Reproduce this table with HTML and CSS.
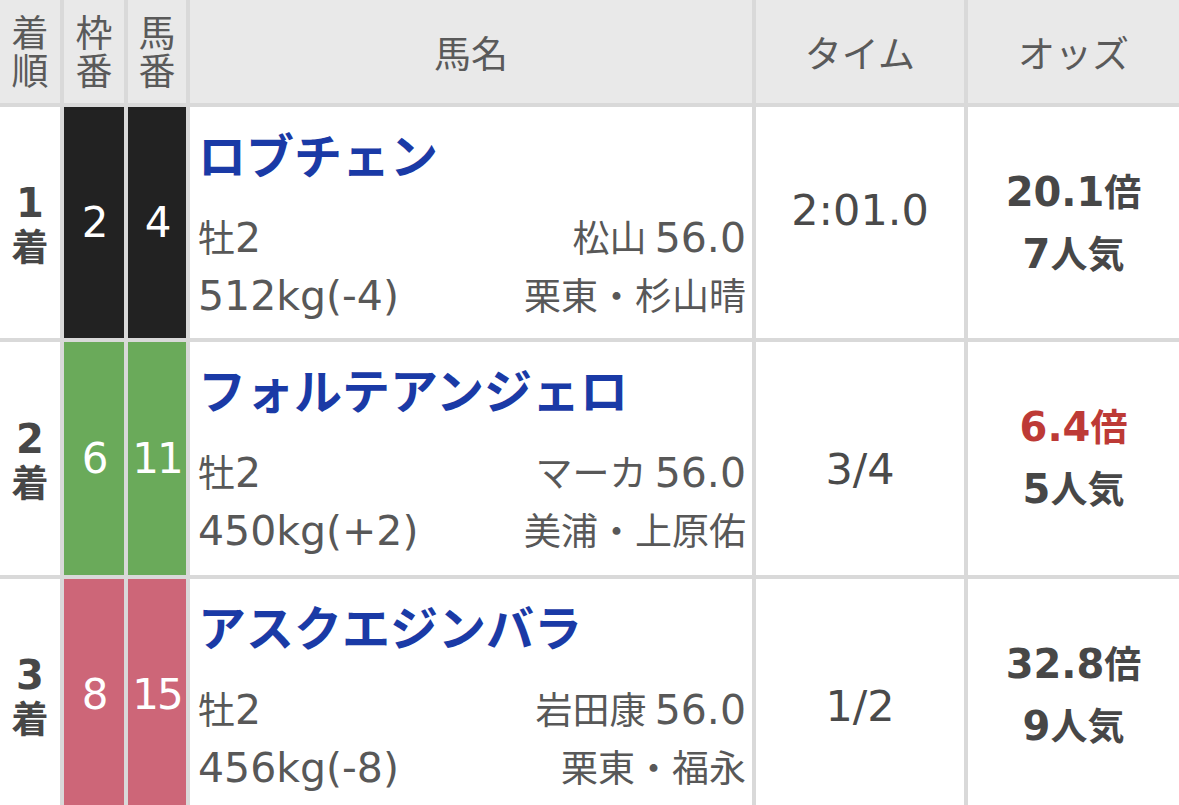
FILE: index.html
```html
<!DOCTYPE html>
<html lang="ja">
<head>
<meta charset="utf-8">
<title>レース結果</title>
<link rel="stylesheet" href="styles.css">
</head>
<body>
<div class="tbl">
  <div class="hd"><span class="vt">着順</span></div>
  <div class="hd"><span class="vt">枠番</span></div>
  <div class="hd"><span class="vt">馬番</span></div>
  <div class="hd">馬名</div>
  <div class="hd">タイム</div>
  <div class="hd">オッズ</div>

  <div class="rank"><span class="vr"><span class="nb">1</span>着</span></div>
  <div class="num w1"><span class="nr">2</span></div>
  <div class="num w1"><span class="nr">4</span></div>
  <div class="horse">
    <div class="name">ロブチェン</div>
    <div class="info">
      <div>牡<span class="n">2</span></div>
      <div class="r">松山 <span class="n">56.0</span></div>
      <div><span class="n">512kg(-4)</span></div>
      <div class="r">栗東・杉山晴</div>
    </div>
  </div>
  <div class="time first"><span class="nt">2:01.0</span></div>
  <div class="odds">
    <div class="ov"><span class="nb">20.1</span>倍</div>
    <div class="pop"><span class="nb">7</span>人気</div>
  </div>

  <div class="rank"><span class="vr"><span class="nb">2</span>着</span></div>
  <div class="num w6"><span class="nr">6</span></div>
  <div class="num w6"><span class="nr">11</span></div>
  <div class="horse">
    <div class="name">フォルテアンジェロ</div>
    <div class="info">
      <div>牡<span class="n">2</span></div>
      <div class="r">マーカ <span class="n">56.0</span></div>
      <div><span class="n">450kg(+2)</span></div>
      <div class="r">美浦・上原佑</div>
    </div>
  </div>
  <div class="time"><span class="nt">3/4</span></div>
  <div class="odds">
    <div class="ov hot"><span class="nb">6.4</span>倍</div>
    <div class="pop"><span class="nb">5</span>人気</div>
  </div>

  <div class="rank"><span class="vr"><span class="nb">3</span>着</span></div>
  <div class="num w8"><span class="nr">8</span></div>
  <div class="num w8"><span class="nr">15</span></div>
  <div class="horse">
    <div class="name">アスクエジンバラ</div>
    <div class="info">
      <div>牡<span class="n">2</span></div>
      <div class="r">岩田康 <span class="n">56.0</span></div>
      <div><span class="n">456kg(-8)</span></div>
      <div class="r">栗東・福永</div>
    </div>
  </div>
  <div class="time"><span class="nt">1/2</span></div>
  <div class="odds">
    <div class="ov"><span class="nb">32.8</span>倍</div>
    <div class="pop"><span class="nb">9</span>人気</div>
  </div>
</div>
</body>
</html>
```

FILE: styles.css
```css
html, body {
  margin: 0;
  padding: 0;
  background: #ffffff;
  overflow: hidden;
}

body {
  font-family: "Noto Sans CJK JP", sans-serif;
  font-size: 37px;
  color: #555555;
}

.tbl {
  display: grid;
  grid-template-columns: 60px 60px 58px 562px 208px 211px;
  grid-template-rows: 103px 231px 233px 231px;
  gap: 4px;
  background: #d9d9d9;
  width: 1179px;
}

.hd {
  background: #e9e9e9;
  color: #5a5a5a;
  font-weight: 400;
  display: flex;
  align-items: center;
  justify-content: center;
  line-height: 38px;
}

.vt {
  writing-mode: vertical-rl;
  text-orientation: upright;
  letter-spacing: 1px;
  line-height: 40px;
}

.vr {
  writing-mode: vertical-rl;
  text-orientation: upright;
  line-height: 44px;
}

.vr .nb {
  margin-bottom: 2px;
}

.n {
  font-family: "DejaVu Sans", sans-serif;
  font-size: 41px;
}

.nt {
  font-family: "DejaVu Sans", sans-serif;
  font-size: 43px;
}

.nb {
  font-family: "DejaVu Sans", sans-serif;
  font-weight: 700;
  font-size: 40px;
}

.nr {
  font-family: "DejaVu Sans", sans-serif;
  font-size: 42px;
  letter-spacing: -2px;
}

.rank {
  background: #ffffff;
  display: flex;
  align-items: center;
  justify-content: center;
  font-weight: 700;
  color: #474747;
}

.num {
  display: flex;
  align-items: center;
  justify-content: center;
  color: #ffffff;
  white-space: nowrap;
}

.w1 { background: #222222; }
.w6 { background: #6aaa5a; }
.w8 { background: #cd6678; }

.horse {
  background: #ffffff;
  padding: 18px 6px 0 8px;
}

.name {
  color: #1a3aa6;
  font-weight: 700;
  font-size: 48px;
  line-height: 56px;
  white-space: nowrap;
}

.info {
  margin-top: 26px;
  display: grid;
  grid-template-columns: 1fr auto;
  grid-auto-rows: 58px;
  align-items: center;
  color: #585858;
  white-space: nowrap;
}

.info .r {
  text-align: right;
}

.time {
  background: #ffffff;
  text-align: center;
  padding-top: 98px;
  line-height: 56px;
  color: #4a4a4a;
}

.time.first {
  padding-top: 74px;
}

.odds {
  background: #ffffff;
  padding-top: 53px;
  text-align: center;
  font-weight: 700;
  color: #474747;
}

.ov, .pop {
  line-height: 60px;
}

.ov.hot {
  color: #bd3a36;
}
```
